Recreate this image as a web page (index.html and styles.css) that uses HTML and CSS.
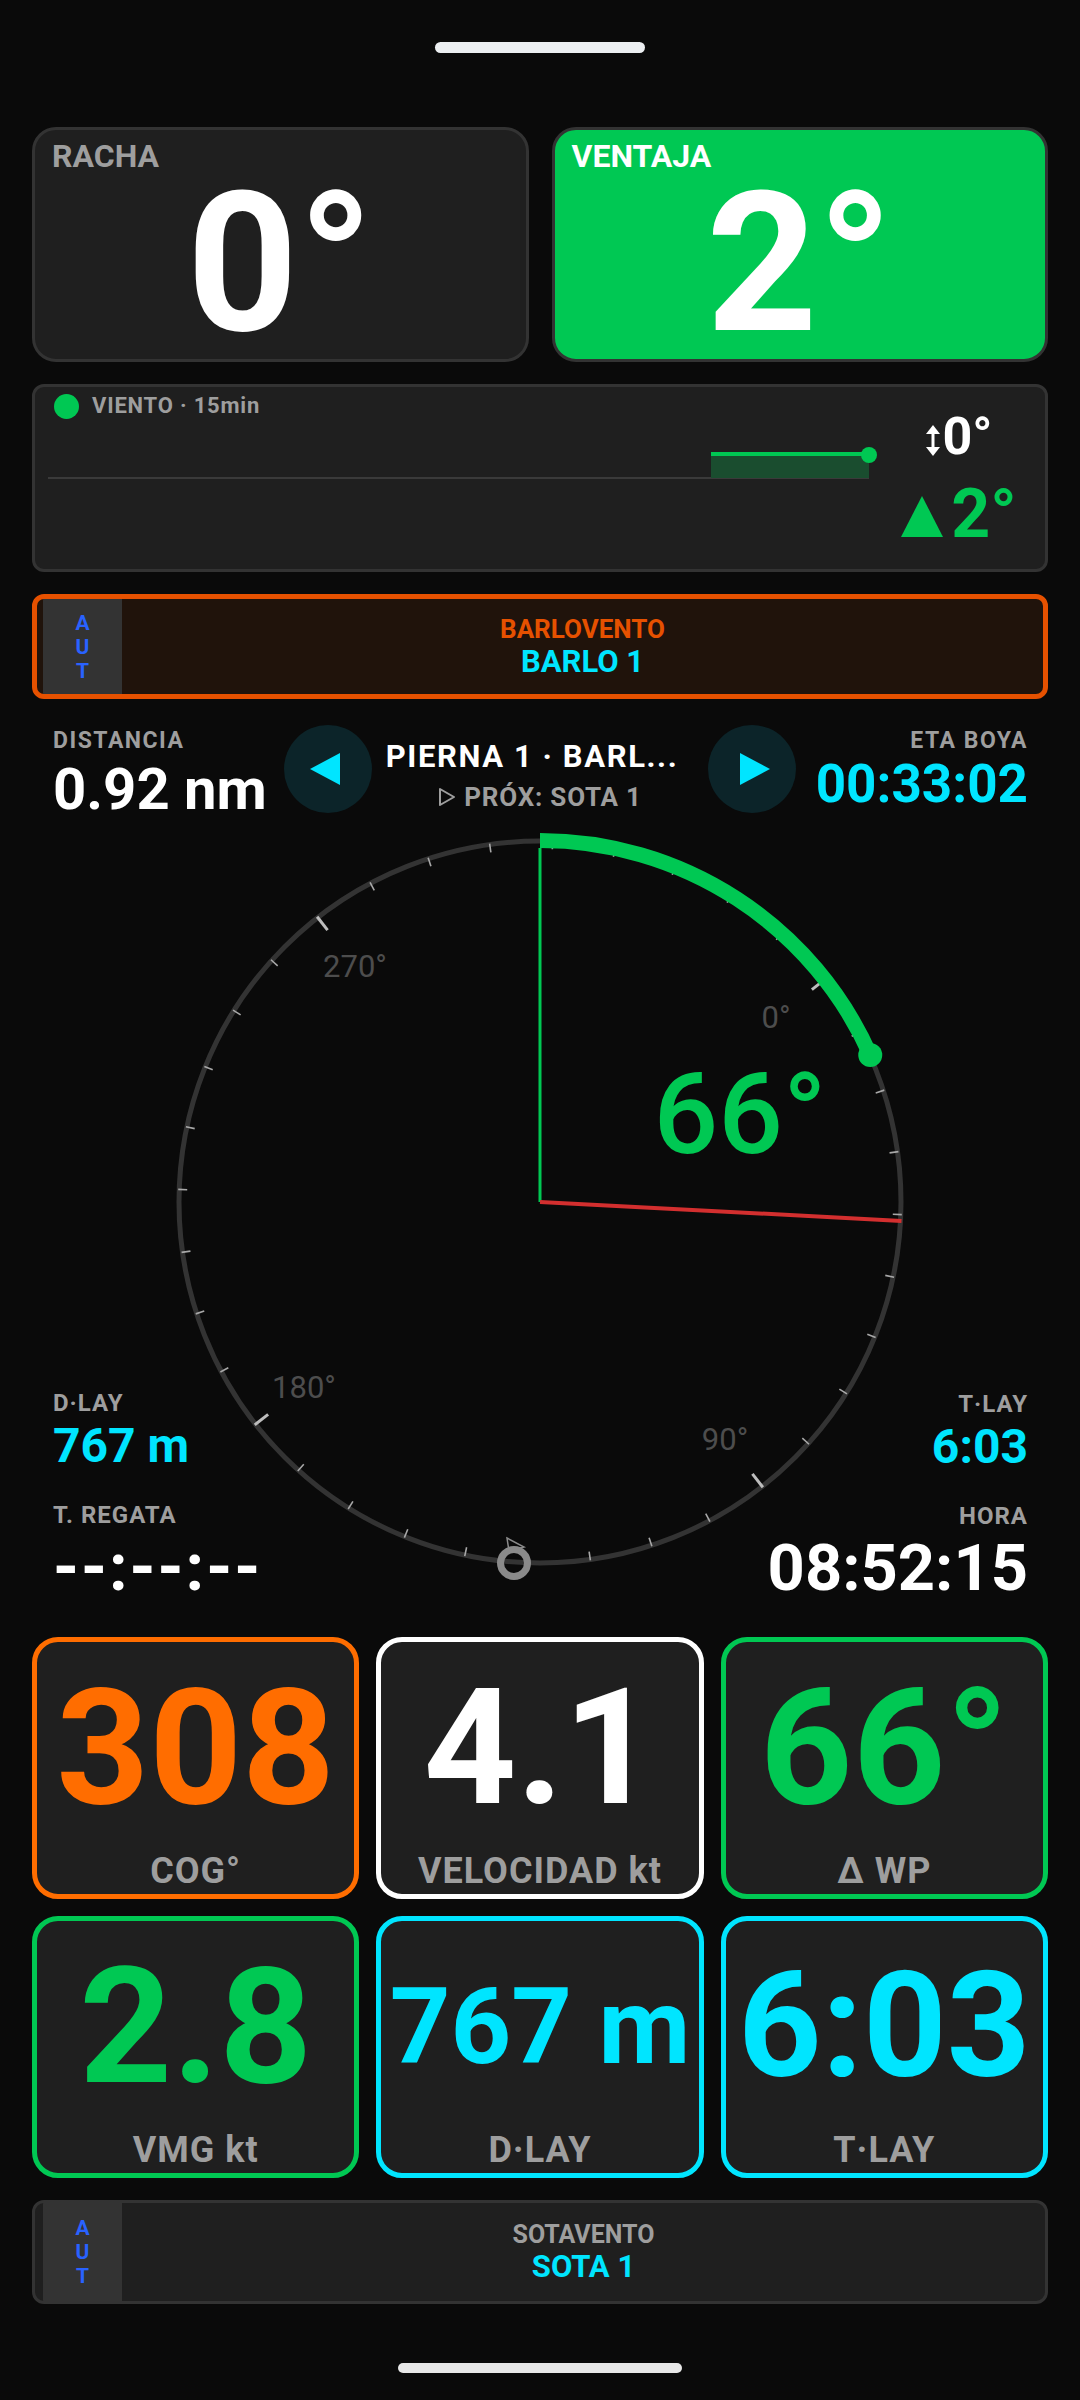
FILE: index.html
```html
<!DOCTYPE html>
<html lang="es">
<head>
<meta charset="utf-8">
<title>Regata</title>
<link rel="stylesheet" href="styles.css">
</head>
<body>
<div class="screen">
  <div class="handle handle--top"></div>

  <section class="top-cards">
    <div class="big-card">
      <div class="big-label">RACHA</div>
      <div class="big-value">0°</div>
    </div>
    <div class="big-card big-card--green">
      <div class="big-label">VENTAJA</div>
      <div class="big-value">2°</div>
    </div>
  </section>

  <section class="wind-card">
    <div class="wind-left">
      <div class="wind-head"><span class="wind-dot"></span><span class="wind-title">VIENTO · 15min</span></div>
      <svg class="wind-chart" width="832" height="80" viewBox="0 0 832 80">
        <line x1="0" y1="59" x2="821" y2="59" stroke="#3a3a3a" stroke-width="2"/>
        <rect x="663" y="34" width="158" height="25" fill="#1a4d2f"/>
        <line x1="663" y1="35" x2="821" y2="35" stroke="#00c853" stroke-width="4"/>
        <circle cx="821" cy="36" r="8" fill="#00c853"/>
      </svg>
    </div>
    <div class="wind-right">
      <div class="wind-row">
        <svg class="wind-arrow" width="16" height="31" viewBox="0 0 16 31">
          <line x1="8" y1="6" x2="8" y2="25" stroke="#fff" stroke-width="3"/>
          <polygon points="1,9 8,0 15,9" fill="#fff"/>
          <polygon points="1,22 8,31 15,22" fill="#fff"/>
        </svg>
        <span class="wind-val">0°</span>
      </div>
      <div class="wind-row wind-row--green">
        <svg class="wind-tri" width="42" height="41" viewBox="0 0 42 41">
          <polygon points="21,0 42,41 0,41" fill="#00c853"/>
        </svg>
        <span class="wind-val wind-val--lg">2°</span>
      </div>
    </div>
  </section>

  <section class="mark-card mark-card--active">
    <div class="mark-mode"><span>A</span><span>U</span><span>T</span></div>
    <div class="mark-body">
      <div class="mark-type mark-type--orange">BARLOVENTO</div>
      <div class="mark-name">BARLO 1</div>
    </div>
  </section>

  <section class="nav">
    <div class="nav-stat">
      <div class="nav-label">DISTANCIA</div>
      <div class="nav-value">0.92 nm</div>
    </div>
    <div class="nav-btn">
      <svg class="nav-tri nav-tri--left" width="30" height="32" viewBox="0 0 30 32"><polygon points="0,16 30,0 30,32" fill="#00e5ff"/></svg>
    </div>
    <div class="nav-center">
      <div class="nav-leg">PIERNA 1 · BARL...</div>
      <div class="nav-next">
        <svg class="nav-next-icon" width="18" height="20" viewBox="0 0 18 20"><polygon points="2,2 16,10 2,18" fill="none" stroke="#9e9e9e" stroke-width="2" stroke-linejoin="round"/></svg>
        <span>PRÓX: SOTA 1</span>
      </div>
    </div>
    <div class="nav-btn">
      <svg class="nav-tri nav-tri--right" width="30" height="32" viewBox="0 0 30 32"><polygon points="0,0 30,16 0,32" fill="#00e5ff"/></svg>
    </div>
    <div class="nav-stat nav-stat--right">
      <div class="nav-label">ETA BOYA</div>
      <div class="nav-value nav-value--cyan">00:33:02</div>
    </div>
  </section>

  <section class="compass">
    <svg class="compass-svg" width="1080" height="790" viewBox="0 830 1080 790">
      <circle cx="540" cy="1202" r="361" fill="none" stroke="#333" stroke-width="5"/>
      <g transform="translate(540 1202)" stroke="#a8a8a8" stroke-width="1.6">
        <line x1="0" y1="-362" x2="0" y2="-345" stroke-width="3" stroke="#bdbdbd" transform="rotate(52)"/>
        <line x1="0" y1="-362" x2="0" y2="-353" transform="rotate(62)"/>
        <line x1="0" y1="-362" x2="0" y2="-353" transform="rotate(72)"/>
        <line x1="0" y1="-362" x2="0" y2="-353" transform="rotate(82)"/>
        <line x1="0" y1="-362" x2="0" y2="-353" transform="rotate(92)"/>
        <line x1="0" y1="-362" x2="0" y2="-353" transform="rotate(102)"/>
        <line x1="0" y1="-362" x2="0" y2="-353" transform="rotate(112)"/>
        <line x1="0" y1="-362" x2="0" y2="-353" transform="rotate(122)"/>
        <line x1="0" y1="-362" x2="0" y2="-353" transform="rotate(132)"/>
        <line x1="0" y1="-362" x2="0" y2="-345" stroke-width="3" stroke="#bdbdbd" transform="rotate(142)"/>
        <line x1="0" y1="-362" x2="0" y2="-353" transform="rotate(152)"/>
        <line x1="0" y1="-362" x2="0" y2="-353" transform="rotate(162)"/>
        <line x1="0" y1="-362" x2="0" y2="-353" transform="rotate(172)"/>
        <line x1="0" y1="-362" x2="0" y2="-353" transform="rotate(182)"/>
        <line x1="0" y1="-362" x2="0" y2="-353" transform="rotate(192)"/>
        <line x1="0" y1="-362" x2="0" y2="-353" transform="rotate(202)"/>
        <line x1="0" y1="-362" x2="0" y2="-353" transform="rotate(212)"/>
        <line x1="0" y1="-362" x2="0" y2="-353" transform="rotate(222)"/>
        <line x1="0" y1="-362" x2="0" y2="-345" stroke-width="3" stroke="#bdbdbd" transform="rotate(232)"/>
        <line x1="0" y1="-362" x2="0" y2="-353" transform="rotate(242)"/>
        <line x1="0" y1="-362" x2="0" y2="-353" transform="rotate(252)"/>
        <line x1="0" y1="-362" x2="0" y2="-353" transform="rotate(262)"/>
        <line x1="0" y1="-362" x2="0" y2="-353" transform="rotate(272)"/>
        <line x1="0" y1="-362" x2="0" y2="-353" transform="rotate(282)"/>
        <line x1="0" y1="-362" x2="0" y2="-353" transform="rotate(292)"/>
        <line x1="0" y1="-362" x2="0" y2="-353" transform="rotate(302)"/>
        <line x1="0" y1="-362" x2="0" y2="-353" transform="rotate(312)"/>
        <line x1="0" y1="-362" x2="0" y2="-345" stroke-width="3" stroke="#bdbdbd" transform="rotate(322)"/>
        <line x1="0" y1="-362" x2="0" y2="-353" transform="rotate(332)"/>
        <line x1="0" y1="-362" x2="0" y2="-353" transform="rotate(342)"/>
        <line x1="0" y1="-362" x2="0" y2="-353" transform="rotate(352)"/>
        <line x1="0" y1="-362" x2="0" y2="-353" transform="rotate(2)"/>
        <line x1="0" y1="-362" x2="0" y2="-353" transform="rotate(12)"/>
        <line x1="0" y1="-362" x2="0" y2="-353" transform="rotate(22)"/>
        <line x1="0" y1="-362" x2="0" y2="-353" transform="rotate(32)"/>
        <line x1="0" y1="-362" x2="0" y2="-353" transform="rotate(42)"/>
      </g>
      <path d="M540 840.5 A361.5 361.5 0 0 1 870.25 1054.96" fill="none" stroke="#00c853" stroke-width="15"/>
      <circle cx="870.25" cy="1054.96" r="12" fill="#00c853"/>
      <line x1="540" y1="1202" x2="540" y2="848" stroke="#00c853" stroke-width="3"/>
      <line x1="540" y1="1202" x2="901.5" y2="1220.9" stroke="#d32f2f" stroke-width="4"/>
      <g class="rose-labels">
        <text x="776" y="1028" text-anchor="middle">0°</text>
        <text x="725" y="1450" text-anchor="middle">90°</text>
        <text x="304" y="1398" text-anchor="middle">180°</text>
        <text x="355" y="977" text-anchor="middle">270°</text>
      </g>
      <text class="delta-text" x="740" y="1153" text-anchor="middle">66°</text>
      <polygon points="507,1538 524,1547 509,1551" fill="none" stroke="#8a8a8a" stroke-width="1.5"/>
      <circle cx="514" cy="1563" r="13.5" fill="none" stroke="#8a8a8a" stroke-width="7"/>
    </svg>

    <div class="side side--left">
      <div class="stat-label">D·LAY</div>
      <div class="stat-value">767 m</div>
      <div class="stat-label stat-label--second">T. REGATA</div>
      <div class="stat-clock stat-clock--empty">--:--:--</div>
    </div>
    <div class="side side--right">
      <div class="stat-label">T·LAY</div>
      <div class="stat-value">6:03</div>
      <div class="stat-label stat-label--second">HORA</div>
      <div class="stat-clock">08:52:15</div>
    </div>
  </section>

  <section class="tiles">
    <div class="tile tile--orange">
      <div class="tile-num">308</div>
      <div class="tile-label">COG°</div>
    </div>
    <div class="tile tile--white">
      <div class="tile-num">4.1</div>
      <div class="tile-label">VELOCIDAD kt</div>
    </div>
    <div class="tile tile--green">
      <div class="tile-num">66°</div>
      <div class="tile-label">Δ WP</div>
    </div>
    <div class="tile tile--green">
      <div class="tile-num">2.8</div>
      <div class="tile-label">VMG kt</div>
    </div>
    <div class="tile tile--cyan">
      <div class="tile-num tile-num--md">767 m</div>
      <div class="tile-label">D·LAY</div>
    </div>
    <div class="tile tile--cyan">
      <div class="tile-num tile-num--lg">6:03</div>
      <div class="tile-label">T·LAY</div>
    </div>
  </section>

  <section class="mark-card mark-card--idle">
    <div class="mark-mode"><span>A</span><span>U</span><span>T</span></div>
    <div class="mark-body">
      <div class="mark-type">SOTAVENTO</div>
      <div class="mark-name">SOTA 1</div>
    </div>
  </section>

  <div class="handle handle--bottom"></div>
</div>
</body>
</html>
```

FILE: styles.css
```css
* { box-sizing: border-box; }

html, body {
  margin: 0;
  padding: 0;
  background: #0a0a0a;
}

body {
  font-family: Roboto, "Noto Sans", "Liberation Sans", sans-serif;
  color: #fff;
  width: 1080px;
  height: 2400px;
  overflow: hidden;
}

.screen {
  display: flex;
  flex-direction: column;
}

.handle {
  background: #eceff1;
  border-radius: 6px;
  align-self: center;
}
.handle--top { width: 210px; height: 11px; margin-top: 42px; }
.handle--bottom { width: 284px; height: 10px; margin-top: 59px; background: #e8e8e8; }

/* top cards */
.top-cards {
  display: grid;
  grid-template-columns: 1fr 1fr;
  gap: 23px;
  margin: 74px 32px 0;
}
.big-card {
  height: 235px;
  border: 3px solid #333;
  border-radius: 24px;
  background: #1f1f1f;
  padding: 10px 17px 0;
  display: flex;
  flex-direction: column;
}
.big-card--green { background: #00c853; }
.big-label {
  font-size: 32px;
  line-height: 1;
  font-weight: 700;
  color: #9e9e9e;
}
.big-card--green .big-label { color: #fff; }
.big-value {
  font-size: 194px;
  line-height: 1;
  font-weight: 700;
  text-align: center;
  margin-top: -5px;
  color: #fff;
}

/* wind card */
.wind-card {
  display: flex;
  height: 188px;
  margin: 22px 32px 0;
  border: 3px solid #333;
  border-radius: 12px;
  background: #1f1f1f;
}
.wind-left {
  flex: 1;
  padding: 6px 0 0 13px;
  display: flex;
  flex-direction: column;
}
.wind-head {
  display: flex;
  align-items: center;
  height: 26px;
  margin-left: 6px;
  gap: 13px;
}
.wind-dot {
  width: 25px;
  height: 25px;
  border-radius: 50%;
  background: #00c853;
}
.wind-title {
  font-size: 22px;
  line-height: 1;
  font-weight: 700;
  letter-spacing: 0.8px;
  color: #9e9e9e;
}
.wind-chart { display: block; }
.wind-right {
  width: 150px;
  margin-right: 11px;
  padding-top: 24px;
  display: flex;
  flex-direction: column;
  align-items: center;
  gap: 17px;
}
.wind-row {
  display: flex;
  align-items: flex-start;
}
.wind-arrow { margin-top: 14px; margin-right: 1px; }
.wind-tri { margin-top: 16px; margin-right: 8px; }
.wind-val {
  font-size: 52px;
  line-height: 1;
  font-weight: 700;
  color: #fff;
}
.wind-val--lg { font-size: 68px; color: #00c853; }

/* mark cards */
.mark-card {
  display: flex;
  margin: 22px 32px 0;
  overflow: hidden;
}
.mark-card--active {
  height: 105px;
  border: 5px solid #e65100;
  border-radius: 12px;
  background: #20130b;
}
.mark-card--idle {
  height: 104px;
  border: 3px solid #333;
  border-radius: 12px;
  background: #1f1f1f;
}
.mark-mode {
  width: 79px;
  background: #333;
  display: flex;
  flex-direction: column;
  align-items: center;
  justify-content: center;
  color: #2962ff;
  font-size: 21px;
  line-height: 24px;
  font-weight: 700;
}
.mark-card--active .mark-mode { margin-left: 6px; }
.mark-card--idle .mark-mode { margin-left: 8px; }
.mark-body {
  flex: 1;
  display: flex;
  flex-direction: column;
  align-items: center;
  justify-content: center;
  gap: 4px;
}
.mark-type {
  font-size: 25px;
  line-height: 1;
  font-weight: 700;
  color: #9e9e9e;
}
.mark-type--orange { color: #e65100; font-size: 26px; }
.mark-name {
  font-size: 31px;
  line-height: 1;
  font-weight: 700;
  color: #00e5ff;
}

/* nav row */
.nav {
  display: grid;
  grid-template-columns: 231px 88px 1fr 88px 232px;
  margin-top: 26px;
  padding: 0 52px 0 53px;
  height: 89px;
}
.nav-stat { margin-top: 4px; }
.nav-stat--right { text-align: right; }
.nav-label {
  font-size: 23px;
  line-height: 1;
  font-weight: 700;
  letter-spacing: 1.5px;
  color: #9e9e9e;
}
.nav-value {
  margin-top: 8px;
  font-size: 58px;
  line-height: 1;
  font-weight: 700;
  color: #fff;
  white-space: nowrap;
}
.nav-value--cyan {
  color: #00e5ff;
  font-size: 53px;
  margin-top: 6px;
}
.nav-btn {
  width: 88px;
  height: 88px;
  border-radius: 50%;
  background: #0c2429;
  display: flex;
  align-items: center;
  justify-content: center;
}
.nav-tri--left { margin-left: -6px; }
.nav-tri--right { margin-left: 6px; }
.nav-center {
  display: flex;
  flex-direction: column;
  align-items: center;
  padding-top: 16px;
}
.nav-leg {
  font-size: 31px;
  line-height: 1;
  font-weight: 700;
  letter-spacing: 1.6px;
  color: #fff;
  white-space: nowrap;
  margin-right: 16px;
}
.nav-next {
  margin-top: 12px;
  display: flex;
  align-items: center;
  gap: 8px;
  font-size: 26px;
  line-height: 1;
  font-weight: 700;
  letter-spacing: 0.8px;
  color: #9e9e9e;
  white-space: nowrap;
}

/* compass */
.compass {
  display: grid;
  grid-template-columns: 1fr 1fr;
  height: 790px;
  margin-top: 16px;
}
.compass-svg {
  grid-column: 1 / 3;
  grid-row: 1;
  display: block;
}
.rose-labels text {
  font-family: Roboto, "Noto Sans", sans-serif;
  font-size: 31px;
  font-weight: 400;
  fill: #4d4d4d;
}
.delta-text {
  font-family: Roboto, "Noto Sans", sans-serif;
  font-size: 114px;
  font-weight: 500;
  fill: #00c853;
}
.side {
  grid-row: 1;
  align-self: end;
  padding-bottom: 19px;
}
.side--left { grid-column: 1; justify-self: start; padding-left: 53px; }
.side--right { grid-column: 2; justify-self: end; padding-right: 52px; text-align: right; }
.stat-label {
  font-size: 24px;
  line-height: 1;
  font-weight: 700;
  letter-spacing: 1px;
  color: #9e9e9e;
}
.stat-label--second { margin-top: 33px; }
.stat-value {
  margin-top: 7px;
  font-size: 48px;
  line-height: 1;
  font-weight: 700;
  color: #00e5ff;
}
.stat-clock {
  margin-top: 8px;
  font-size: 65px;
  line-height: 1;
  font-weight: 700;
  color: #fff;
  white-space: nowrap;
}
.stat-clock--empty { letter-spacing: 2px; font-size: 66px; }

/* tiles */
.tiles {
  display: grid;
  grid-template-columns: repeat(3, 1fr);
  gap: 17px;
  margin: 17px 32px 0;
}
.tile {
  height: 262px;
  border: 5px solid #333;
  border-radius: 26px;
  background: #1f1f1f;
  display: flex;
  flex-direction: column;
  padding-bottom: 5px;
}
.tile-num {
  flex: 1;
  display: flex;
  align-items: center;
  justify-content: center;
  font-size: 162px;
  line-height: 1;
  font-weight: 700;
  white-space: nowrap;
}
.tile-num--md { font-size: 106px; }
.tile-num--lg { font-size: 146px; }
.tile-label {
  font-size: 36px;
  line-height: 1;
  font-weight: 700;
  letter-spacing: 1px;
  text-align: center;
  color: #9e9e9e;
}
.tile--orange { border-color: #ff6d00; color: #ff6d00; }
.tile--white { border-color: #fff; color: #fff; }
.tile--green { border-color: #00c853; color: #00c853; }
.tile--cyan { border-color: #00e5ff; color: #00e5ff; }
```
